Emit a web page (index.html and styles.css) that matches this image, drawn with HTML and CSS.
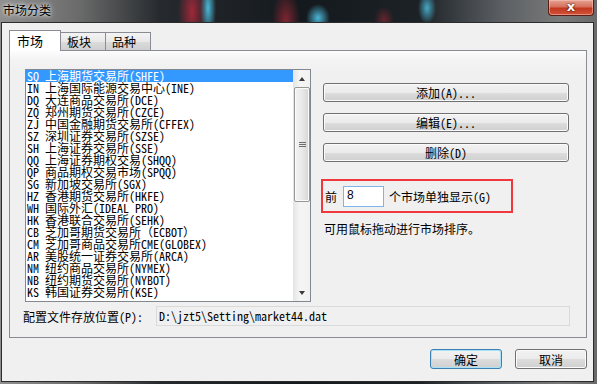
FILE: index.html
```html
<!DOCTYPE html>
<html lang="zh-CN">
<head>
    <meta charset="UTF-8">
    <title>市场分类</title>
    <link rel="stylesheet" href="styles.css">
</head>
<body>
    <div class="window">
        <div class="titlebar">
            <span class="title">市场分类</span>
            <span class="close">x</span>
        </div>
        <div class="client">
            <div class="tabs">
                <span class="tab active">市场</span>
                <span class="tab">板块</span>
                <span class="tab">品种</span>
            </div>
            <div class="panel">
                <div class="main">
                    <div class="listbox">
                        <ul class="items">
                            <li class="sel">SQ 上海期货交易所(SHFE)</li>
                            <li>IN 上海国际能源交易中心(INE)</li>
                            <li>DQ 大连商品交易所(DCE)</li>
                            <li>ZQ 郑州期货交易所(CZCE)</li>
                            <li>ZJ 中国金融期货交易所(CFFEX)</li>
                            <li>SZ 深圳证券交易所(SZSE)</li>
                            <li>SH 上海证券交易所(SSE)</li>
                            <li>QQ 上海证券期权交易(SHQQ)</li>
                            <li>QP 商品期权交易市场(SPQQ)</li>
                            <li>SG 新加坡交易所(SGX)</li>
                            <li>HZ 香港期货交易所(HKFE)</li>
                            <li>WH 国际外汇(IDEAL PRO)</li>
                            <li>HK 香港联合交易所(SEHK)</li>
                            <li>CB 芝加哥期货交易所（ECBOT）</li>
                            <li>CM 芝加哥商品交易所CME(GLOBEX)</li>
                            <li>AR 美股统一证券交易所(ARCA)</li>
                            <li>NM 纽约商品交易所(NYMEX)</li>
                            <li>NB 纽约期货交易所(NYBOT)</li>
                            <li>KS 韩国证券交易所(KSE)</li>
                        </ul>
                        <div class="vscroll">
                            <span class="arrow"><i class="up"></i></span>
                            <span class="thumb"><i></i><i></i><i></i></span>
                            <span class="track"></span>
                            <span class="arrow"><i class="down"></i></span>
                        </div>
                    </div>
                    <div class="side">
                        <button class="btn wide">添加(A)...</button>
                        <button class="btn wide">编辑(E)...</button>
                        <button class="btn wide">删除(D)</button>
                        <div class="showbox">
                            <span>前</span>
                            <span class="num">8</span>
                            <span>个市场单独显示(G)</span>
                        </div>
                        <p class="hint">可用鼠标拖动进行市场排序。</p>
                    </div>
                </div>
                <div class="pathrow">
                    <span class="label">配置文件存放位置(P):</span>
                    <span class="path">D:\jzt5\Setting\market44.dat</span>
                </div>
            </div>
            <div class="footer">
                <button class="btn small default">确定</button>
                <button class="btn small">取消</button>
            </div>
        </div>
    </div>
</body>
</html>
```

FILE: styles.css
```css
*{
    margin: 0;
    padding: 0;
    box-sizing: border-box;
}
li{
    list-style: none;
}
body{
    background: #2a2f33;
    font-family: "Noto Sans Mono CJK SC", "Liberation Mono", "Noto Sans CJK SC", monospace;
    font-size: 12px;
    color: #000;
}

.window{
    width: 597px;
    height: 384px;
    display: flex;
    flex-direction: column;
    background:
        radial-gradient(ellipse 14px 40px at 192px 12px, rgba(190, 40, 60, 0.8), transparent),
        radial-gradient(ellipse 8px 30px at 208px 8px, rgba(80, 200, 235, 0.9), transparent),
        radial-gradient(ellipse 14px 30px at 286px 20px, rgba(170, 40, 55, 0.7), transparent),
        radial-gradient(ellipse 12px 14px at 318px 18px, rgba(80, 200, 235, 0.9), transparent),
        radial-gradient(ellipse 9px 16px at 427px 8px, rgba(80, 200, 235, 0.8), transparent),
        radial-gradient(ellipse 10px 14px at 384px 20px, rgba(150, 40, 55, 0.6), transparent),
        linear-gradient(to right, #8f8f8f 0, #6a6a6a 80px, #262a2e 160px, #14191d 300px, #1c2226 420px, #5a5e62 500px, #7a7a7a 560px, #6a6a6a 597px);
}

.titlebar{
    height: 22px;
    display: flex;
    justify-content: space-between;
    align-items: flex-start;
    padding: 0 3px 0 3px;
}
.title{
    font-family: "Noto Sans CJK SC", sans-serif;
    font-size: 12px;
    line-height: 20px;
    color: #000;
    text-shadow: 0 0 6px rgba(255, 255, 255, 0.9), 0 0 3px rgba(255, 255, 255, 0.9);
}
.close{
    width: 46px;
    height: 16px;
    border: 1px solid #5a1e16;
    border-top: none;
    border-radius: 0 0 4px 4px;
    background: linear-gradient(#e3a393 0%, #d7705c 45%, #c2381f 55%, #d2543a 100%);
    box-shadow: inset 0 0 0 1px rgba(255, 200, 190, 0.5);
    color: #fff;
    font-family: "DejaVu Sans", sans-serif;
    font-weight: bold;
    font-size: 13px;
    line-height: 13px;
    text-align: center;
    text-shadow: 0 0 2px #3a1010, 0 0 1px #3a1010;
}

.client{
    flex: 1;
    margin: 0 3px 2px 1px;
    border: 1px solid #2c2c2c;
    background: #f0f0f0;
    padding: 7px 6px 0 7px;
    display: flex;
    flex-direction: column;
}

/* tabs */
.tabs{
    display: flex;
    align-items: flex-end;
    height: 20px;
    position: relative;
    z-index: 1;
}
.tab{
    height: 18px;
    padding: 0 6px;
    border: 1px solid #898c95;
    border-bottom: none;
    background: linear-gradient(#f4f4f4, #e8e8e8 50%, #dcdcdc 51%, #cfcfcf);
    font-family: "Noto Sans CJK SC", sans-serif;
    line-height: 17px;
    width: 46px;
    margin-left: -1px;
}
.tab:first-child{
    margin-left: 0;
}
.tab.active{
    height: 21px;
    width: 52px;
    margin-bottom: -1px;
    padding-left: 7px;
    background: #fff;
    line-height: 19px;
    font-size: 13px;
}

.panel{
    height: 288px;
    border: 1px solid #898c95;
    background: linear-gradient(#fdfdfd, #f4f4f4 8px, #f0f0f0 20px);
    padding: 18px 0 0 13px;
    display: flex;
    flex-direction: column;
}
.main{
    display: flex;
    padding-left: 2px;
}

/* list */
.listbox{
    width: 286px;
    height: 233px;
    border: 1px solid #828790;
    background: #fff;
    display: flex;
}
.items{
    flex: 1;
}
.items li{
    height: 12px;
    line-height: 12px;
    padding-left: 1px;
    white-space: pre;
}
.items .sel{
    background: #3399ff;
    color: #fff;
}
.vscroll{
    width: 17px;
    display: flex;
    flex-direction: column;
    background: linear-gradient(to right, #e4e4e4, #f5f5f5 40%, #f1f1f1);
}
.arrow{
    height: 17px;
    display: flex;
    justify-content: center;
    align-items: center;
}
.arrow i{
    width: 0;
    height: 0;
    border-left: 3px solid transparent;
    border-right: 3px solid transparent;
}
.arrow .up{
    border-bottom: 4px solid #3a3a3a;
}
.arrow .down{
    border-top: 4px solid #3a3a3a;
}
.thumb{
    height: 115px;
    margin-left: 1px;
    width: 16px;
    border: 1px solid #979797;
    border-radius: 2px;
    background: linear-gradient(to right, #f3f3f3, #e9e9e9 50%, #d6d6d6);
    box-shadow: inset 0 0 0 1px #fafafa;
    display: flex;
    flex-direction: column;
    justify-content: center;
    align-items: center;
    gap: 1px;
}
.thumb i{
    width: 7px;
    height: 1px;
    background: #6d6d6d;
}
.track{
    flex: 1;
}

/* right side */
.side{
    width: 246px;
    margin-left: 12px;
    padding-top: 14px;
    display: flex;
    flex-direction: column;
    gap: 11px;
}
.btn{
    height: 19px;
    border: 1px solid #707070;
    border-radius: 3px;
    background: linear-gradient(#f2f2f2 0%, #ebebeb 50%, #dddddd 51%, #cfcfcf 100%);
    box-shadow: inset 0 0 0 1px #fbfbfb;
    font-family: inherit;
    font-size: 12px;
    line-height: 15px;
    color: #000;
}
.btn.wide{
    width: 246px;
}
.showbox{
    margin: 6px 0 0 -2px;
    width: 192px;
    height: 34px;
    border: 2px solid #f0383c;
    display: flex;
    align-items: center;
    padding: 1px 0 0 2px;
}
.num{
    width: 41px;
    height: 21px;
    margin: 0 5px 0 6px;
    border: 1px solid #7eb4ea;
    background: #fff;
    font-family: "Liberation Sans", sans-serif;
    line-height: 16px;
    padding-left: 3px;
}
.hint{
    margin-top: -2px;
    padding-left: 1px;
    line-height: 14px;
}

/* path row */
.pathrow{
    display: flex;
    align-items: center;
    margin-top: 4px;
}
.label{
    width: 133px;
}
.path{
    width: 414px;
    height: 20px;
    border: 1px solid #dadada;
    background: #f0f0f0;
    line-height: 18px;
    padding-left: 2px;
}

/* bottom buttons */
.footer{
    display: flex;
    justify-content: flex-end;
    gap: 13px;
    margin-top: 11px;
}
.btn.small{
    width: 72px;
    height: 20px;
}
.btn.default{
    border-color: #3c7fb1;
    box-shadow: inset 0 0 0 1px #a7e2f9;
}
```
